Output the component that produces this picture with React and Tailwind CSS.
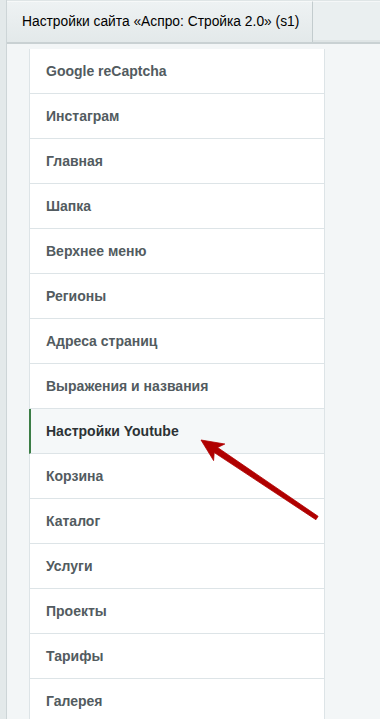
const items = [
  "Google reCaptcha",
  "Инстаграм",
  "Главная",
  "Шапка",
  "Верхнее меню",
  "Регионы",
  "Адреса страниц",
  "Выражения и названия",
  "Настройки Youtube",
  "Корзина",
  "Каталог",
  "Услуги",
  "Проекты",
  "Тарифы",
  "Галерея",
];

export default function App() {
  return (
    <div
      className="relative w-[380px] h-[719px] overflow-hidden flex bg-[#e2e8e9]"
      style={{ fontFamily: '"Liberation Sans", Arial, sans-serif' }}
    >
      {/* left strip */}
      <div className="w-[7px] shrink-0 bg-[#e3e9ea] border-r border-[#cdd5d7]" />

      <div className="flex-1 flex flex-col min-w-0">
        {/* tabs header */}
        <div className="h-[44px] shrink-0 flex items-end bg-[#dfe5e6] border-b-2 border-[#c9d1d3]">
          <div className="w-[306px] h-[41px] shrink-0 flex items-center pl-[15px] bg-gradient-to-b from-[#eef2f3] to-[#e3e9ea] border-t border-r border-t-[#f7f9f9] border-r-[#c3ccce]">
            <span className="text-[13.8px] text-black leading-none">
              Настройки сайта «Аспро: Стройка 2.0» (s1)
            </span>
          </div>
          <div className="flex-1 h-[39px] mb-[2px] bg-[#eaeff0] border-t border-[#f5f7f8]" />
        </div>

        {/* panel body */}
        <div className="flex-1 bg-[#f3f6f7] pl-[22px] pt-[5px]">
          <ul className="w-[296px] bg-white border-x border-[#dde4e7]">
            {items.map((label) => {
              const active = label === "Настройки Youtube";
              return (
                <li
                  key={label}
                  className={
                    active
                      ? "h-[45px] flex items-center pl-[15px] border-l-2 -ml-px border-l-[#3b7d46] border-b border-b-[#dde4e7] bg-[#f5f8f9] text-[14px] font-bold text-[#2c3235]"
                      : "h-[45px] flex items-center pl-[16px] border-b border-[#dde4e7] text-[14px] font-bold text-[#525b60]"
                  }
                >
                  {label}
                </li>
              );
            })}
          </ul>
        </div>
      </div>

      {/* annotation arrow */}
      <svg className="absolute inset-0 pointer-events-none" width="380" height="719" viewBox="0 0 380 719">
        <polygon
          points="201,440 224.8,444 217.6,447.5 318.1,516.3 315.9,519.7 214.2,452.5 213.6,460.6"
          fill="#b00000"
          stroke="#b00000"
          strokeWidth="0.8"
          strokeLinejoin="round"
        />
      </svg>
    </div>
  );
}
